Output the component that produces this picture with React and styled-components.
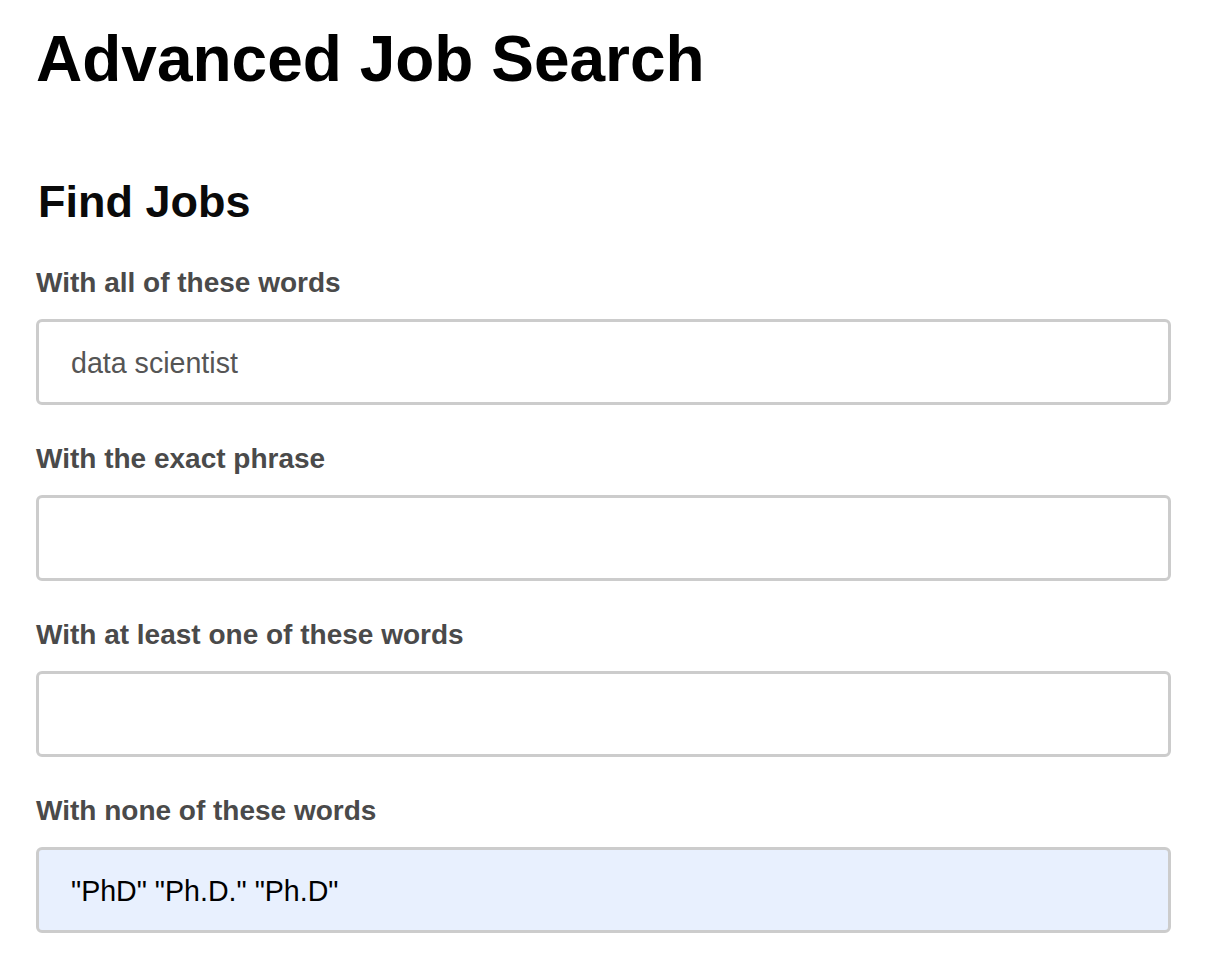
import styled, {createGlobalStyle} from "styled-components";

const GlobalStyle = createGlobalStyle`
   body {
      margin: 0;
      background: #ffffff;
      font-family: "Liberation Sans", Arial, Helvetica, sans-serif;
   }
`;

const Page = styled.div`
   padding: 22px 57px 40px 36px;
   display: flex;
   flex-direction: column;
`;

const Title = styled.h1`
   margin: 0 0 81px 0;
   font-size: 64px;
   line-height: 74px;
   font-weight: 700;
   color: #000;
`;

const SectionTitle = styled.h2`
   margin: 0 0 40px 2px;
   font-size: 45px;
   line-height: 50px;
   font-weight: 700;
   color: #0a0a0a;
`;

const Form = styled.form`
   display: flex;
   flex-direction: column;
   gap: 38px;
`;

const Field = styled.div`
   display: flex;
   flex-direction: column;
   gap: 20px;
`;

const Label = styled.label`
   font-size: 28px;
   line-height: 32px;
   font-weight: 700;
   color: #4a4a4a;
`;

const Input = styled.input`
   box-sizing: border-box;
   width: 100%;
   height: 86px;
   padding: 2px 0 0 32px;
   border: 3px solid #cccccc;
   border-radius: 6px;
   outline: none;
   font-family: "Liberation Sans", Arial, Helvetica, sans-serif;
   font-size: 28.6px;
   color: ${(props) => (props.$filled ? "#000" : "#555")};
   background-color: ${(props) => (props.$filled ? "#e8f0fe" : "#ffffff")};
`;

const fields = [
    {id: "all", label: "With all of these words", value: "data scientist"},
    {id: "exact", label: "With the exact phrase", value: ""},
    {id: "any", label: "With at least one of these words", value: ""},
    {id: "none", label: "With none of these words", value: "\"PhD\" \"Ph.D.\" \"Ph.D\"", filled: true},
];

const App = () => {
    return (
        <>
            <GlobalStyle />
            <Page>
                <Title>Advanced Job Search</Title>
                <SectionTitle>Find Jobs</SectionTitle>
                <Form onSubmit={(e) => e.preventDefault()}>
                    {fields.map((f) => (
                        <Field key={f.id}>
                            <Label htmlFor={f.id}>{f.label}</Label>
                            <Input id={f.id} type="text" defaultValue={f.value} $filled={f.filled} />
                        </Field>
                    ))}
                </Form>
            </Page>
        </>
    );
};

export default App;
